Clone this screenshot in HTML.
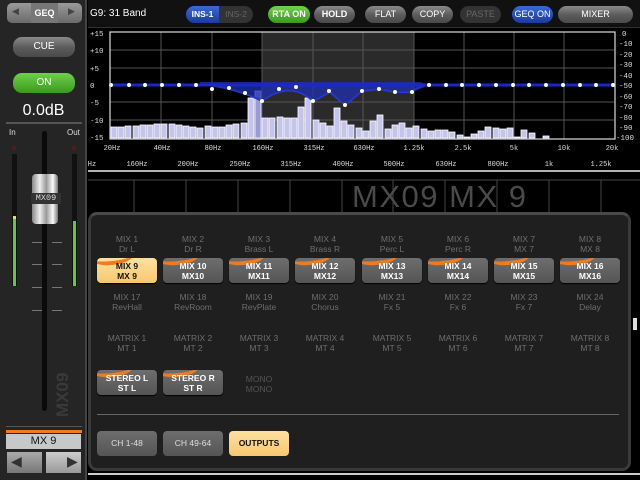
<!DOCTYPE html>
<html><head><meta charset="utf-8"><style>
*{margin:0;padding:0;box-sizing:border-box}
body{width:640px;height:480px;background:#000;position:relative;overflow:hidden;font-family:"Liberation Sans",sans-serif}
.a{position:absolute}
.pill{position:absolute;border-radius:9px;color:#fff;font-size:9px;font-weight:bold;text-align:center;line-height:17px;background:linear-gradient(#8a8a8a,#5a5a5a 55%,#4a4a4a)}
.lbl{position:absolute;width:60px;text-align:center;color:#6e6e6e;font-size:8.5px;line-height:10px}
.btn{position:absolute;width:60px;height:25px;border-radius:4px;background:linear-gradient(#6e6e6e,#555);color:#fff;font-size:8.5px;font-weight:bold;text-align:center;line-height:10px;padding-top:3px;overflow:hidden;box-shadow:0 1px 1px #000}
.btn.o:before{content:"";position:absolute;left:-6px;top:-9px;width:42px;height:12px;border-radius:50%;border-bottom:4px solid #f07a20;transform:rotate(-6deg)}
.btn span{position:relative}
.sel{background:linear-gradient(#fde0a0,#f8c870)!important;color:#111!important}
.bb{position:absolute;top:431px;width:60px;height:25px;border-radius:4px;background:linear-gradient(#6e6e6e,#555);color:#ddd;font-size:8.5px;text-align:center;line-height:25px}
</style></head><body>

<!-- left panel -->
<div class="a" style="left:0;top:0;width:87px;height:480px;background:#252525;border-right:2px solid #444"></div>
<div class="a" style="left:7px;top:3px;width:75px;height:20px;border-radius:5px;background:linear-gradient(#9a9a9a,#6a6a6a)"></div>
<div class="a" style="left:31px;top:3px;width:27px;height:20px;background:#777"></div>
<div class="a" style="left:12px;top:6px;color:#444;font-size:9px">◀</div>
<div class="a" style="left:68px;top:6px;color:#444;font-size:9px">▶</div>
<div class="a" style="left:31px;top:8px;width:27px;text-align:center;color:#fff;font-size:9px;font-weight:bold">GEQ</div>
<div class="pill" style="left:13px;top:37px;width:62px;height:20px;line-height:20px;font-weight:normal;font-size:10px">CUE</div>
<div class="pill" style="left:13px;top:73px;width:62px;height:20px;line-height:20px;font-weight:normal;font-size:10px;background:linear-gradient(#6ed04a,#3a9a1e)">ON</div>
<div class="a" style="left:0;top:102px;width:87px;text-align:center;color:#fff;font-size:16px">0.0dB</div>
<div class="a" style="left:6px;top:122px;width:76px;height:2px;background:#555"></div>
<div class="a" style="left:9px;top:128px;color:#ddd;font-size:8px">In</div>
<div class="a" style="left:67px;top:128px;color:#ddd;font-size:8px">Out</div>
<div class="a" style="left:12px;top:146px;width:4px;height:4px;border-radius:2px;background:#5a1a1a"></div>
<div class="a" style="left:72px;top:146px;width:4px;height:4px;border-radius:2px;background:#5a1a1a"></div>
<div class="a" style="left:12px;top:154px;width:5px;height:132px;background:#111"></div>
<div class="a" style="left:13px;top:217px;width:3px;height:69px;background:#5ccc3a"></div>
<div class="a" style="left:13px;top:216px;width:3px;height:3px;background:#f0e040"></div>
<div class="a" style="left:72px;top:154px;width:5px;height:132px;background:#111"></div>
<div class="a" style="left:73px;top:221px;width:3px;height:65px;background:#5ccc3a"></div>
<div class="a" style="left:42px;top:131px;width:5px;height:280px;border-radius:3px;background:#0a0a0a"></div>
<div class="a" style="left:32px;top:242px;width:10px;height:1px;background:#777;box-shadow:20px 0 #777,0 22px #777,20px 22px #777,0 45px #777,20px 45px #777,0 68px #777,20px 68px #777"></div>
<div class="a" style="left:32px;top:174px;width:26px;height:50px;border-radius:4px;background:linear-gradient(90deg,#888,#eee 30%,#999 55%,#fafafa 80%,#777)"></div>
<div class="a" style="left:31px;top:193px;width:30px;height:11px;background:#333;color:#ddd;font-size:8.5px;text-align:center;line-height:11px;font-family:'Liberation Mono',monospace">MX09</div>
<div class="a" style="transform:rotate(-90deg);color:#3a3a3a;font-size:17px;font-weight:bold;width:60px;transform-origin:0 0;top:417px;left:53px">MX09</div>
<div class="a" style="left:6px;top:426px;width:76px;height:1px;background:#555"></div>
<div class="a" style="left:6px;top:430px;width:76px;height:3px;background:#f07a20"></div>
<div class="a" style="left:6px;top:434px;width:75px;height:15px;background:#c8c8c8;color:#111;font-size:11px;text-align:center;line-height:15px">MX 9</div>
<div class="a" style="left:7px;top:452px;width:35px;height:21px;background:linear-gradient(#aaa,#777)"></div>
<div class="a" style="left:46px;top:452px;width:35px;height:21px;background:linear-gradient(#ccc,#999)"></div>
<div class="a" style="left:11px;top:453px;color:#333;font-size:14px">◀</div>
<div class="a" style="left:67px;top:453px;color:#333;font-size:14px">▶</div>

<!-- top bar -->
<div class="a" style="left:88px;top:0;width:552px;height:28px;background:#111;border-bottom:1px solid #333"></div>
<div class="a" style="left:90px;top:8px;color:#fff;font-size:10px">G9: 31 Band</div>
<div class="a" style="left:186px;top:6px;width:67px;height:17px;border-radius:9px;background:#333;overflow:hidden">
 <div style="position:absolute;left:0;top:0;width:33px;height:17px;background:linear-gradient(#3a6ad8,#1a3aa0);color:#fff;font-size:8.5px;font-weight:bold;line-height:17px;text-align:center">INS-1</div>
 <div style="position:absolute;left:33px;top:0;width:34px;height:17px;color:#666;font-size:8.5px;line-height:17px;text-align:center">INS-2</div></div>
<div class="pill" style="left:268px;top:6px;width:42px;height:17px;background:linear-gradient(#6ed04a,#3a9a1e)">RTA ON</div>
<div class="pill" style="left:314px;top:6px;width:41px;height:17px">HOLD</div>
<div class="pill" style="left:365px;top:6px;width:41px;height:17px;font-weight:normal">FLAT</div>
<div class="pill" style="left:412px;top:6px;width:41px;height:17px;font-weight:normal">COPY</div>
<div class="pill" style="left:460px;top:6px;width:41px;height:17px;background:#333;color:#666;font-weight:normal">PASTE</div>
<div class="pill" style="left:512px;top:6px;width:41px;height:17px;background:linear-gradient(#3a6ad8,#1a3aa0);font-weight:normal">GEQ ON</div>
<div class="pill" style="left:558px;top:6px;width:75px;height:17px;font-weight:normal">MIXER</div>

<!-- graph -->
<svg class="a" style="left:88px;top:28px" width="552" height="190" viewBox="88 28 552 190">
<rect x="262" y="32" width="152" height="107" fill="#2a2a2a"/>
<g stroke="#555" stroke-width="1">
<line x1="110" y1="50" x2="614" y2="50"/><line x1="110" y1="68" x2="614" y2="68"/><line x1="110" y1="85" x2="614" y2="85"/><line x1="110" y1="102" x2="614" y2="102"/><line x1="110" y1="120" x2="614" y2="120"/>
<line x1="161" y1="32" x2="161" y2="139"/><line x1="212" y1="32" x2="212" y2="139"/><line x1="262" y1="32" x2="262" y2="139"/><line x1="313" y1="32" x2="313" y2="139"/><line x1="363" y1="32" x2="363" y2="139"/><line x1="414" y1="32" x2="414" y2="139"/><line x1="464" y1="32" x2="464" y2="139"/><line x1="514" y1="32" x2="514" y2="139"/><line x1="564" y1="32" x2="564" y2="139"/>
</g>
<g fill="#c4c4ee" stroke="#fff" stroke-width="0.8">
<rect x="111" y="127" width="6" height="11"/><rect x="118" y="127" width="6" height="11"/><rect x="125" y="126" width="6" height="12"/><rect x="133" y="126" width="6" height="12"/><rect x="140" y="125" width="6" height="13"/><rect x="147" y="125" width="6" height="13"/><rect x="154" y="124" width="6" height="14"/><rect x="161" y="124" width="6" height="14"/><rect x="169" y="124" width="6" height="14"/><rect x="176" y="125" width="6" height="13"/><rect x="183" y="126" width="6" height="12"/><rect x="190" y="127" width="6" height="11"/><rect x="197" y="128" width="6" height="10"/><rect x="205" y="126" width="6" height="12"/><rect x="212" y="127" width="6" height="11"/><rect x="219" y="127" width="6" height="11"/><rect x="226" y="125" width="6" height="13"/><rect x="233" y="124" width="6" height="14"/><rect x="241" y="123" width="6" height="15"/><rect x="248" y="98" width="6" height="40"/><rect x="255" y="91" width="6" height="47" fill="#9a9ad8"/><rect x="262" y="118" width="6" height="20"/><rect x="269" y="118" width="6" height="20"/><rect x="277" y="117" width="6" height="21"/><rect x="284" y="118" width="6" height="20"/><rect x="291" y="118" width="6" height="20"/><rect x="298" y="107" width="6" height="31"/><rect x="305" y="98" width="6" height="40"/><rect x="313" y="120" width="6" height="18"/><rect x="320" y="123" width="6" height="15"/><rect x="327" y="126" width="6" height="12"/><rect x="334" y="108" width="6" height="30"/><rect x="341" y="121" width="6" height="17"/><rect x="348" y="125" width="6" height="13"/><rect x="356" y="128" width="6" height="10"/><rect x="363" y="131" width="6" height="7"/><rect x="370" y="121" width="6" height="17"/><rect x="377" y="115" width="6" height="23"/><rect x="385" y="129" width="6" height="9"/><rect x="392" y="125" width="6" height="13"/><rect x="399" y="123" width="6" height="15"/><rect x="406" y="128" width="6" height="10"/><rect x="413" y="126" width="6" height="12"/><rect x="421" y="129" width="6" height="9"/><rect x="428" y="131" width="6" height="7"/><rect x="435" y="130" width="6" height="8"/><rect x="442" y="130" width="6" height="8"/><rect x="449" y="132" width="6" height="6"/><rect x="457" y="135" width="6" height="3"/><rect x="464" y="137" width="6" height="1"/><rect x="471" y="134" width="6" height="4"/><rect x="478" y="131" width="6" height="7"/><rect x="485" y="127" width="6" height="11"/><rect x="493" y="128" width="6" height="10"/><rect x="500" y="129" width="6" height="9"/><rect x="507" y="128" width="6" height="10"/><rect x="514" y="137" width="6" height="1"/><rect x="521" y="130" width="6" height="8"/><rect x="529" y="133" width="6" height="5"/><rect x="543" y="136" width="6" height="2"/>
</g>
<path d="M110 85 L210 85 Q240 90 262 101 Q290 80 313 101 L330 92 L345 105 L362 91 L379 89 L395 92 L412 92 Q420 85 430 85 L614 85" fill="none" stroke="#2a3ae0" stroke-width="2"/>
<path d="M200 82 L420 82 L430 85 L412 92 L395 92 L379 89 L362 91 L345 105 L330 92 L313 101 Q290 80 262 101 Q240 90 200 85Z" fill="#2030b0" fill-opacity="0.75"/>
<line x1="110" y1="85" x2="614" y2="85" stroke="#1a28c8" stroke-width="3"/>
<g fill="#fff">
<circle cx="111" cy="85" r="2"/><circle cx="129" cy="85" r="2"/><circle cx="145" cy="85" r="2"/><circle cx="162" cy="85" r="2"/><circle cx="179" cy="85" r="2"/><circle cx="196" cy="85" r="2"/><circle cx="212" cy="89" r="2"/><circle cx="229" cy="88" r="2"/><circle cx="245" cy="93" r="2"/><circle cx="262" cy="101" r="2"/><circle cx="279" cy="89" r="2"/><circle cx="296" cy="87" r="2"/><circle cx="313" cy="101" r="2"/><circle cx="329" cy="91" r="2"/><circle cx="345" cy="105" r="2"/><circle cx="362" cy="91" r="2"/><circle cx="379" cy="89" r="2"/><circle cx="395" cy="92" r="2"/><circle cx="412" cy="92" r="2"/><circle cx="429" cy="85" r="2"/><circle cx="446" cy="85" r="2"/><circle cx="462" cy="85" r="2"/><circle cx="479" cy="85" r="2"/><circle cx="496" cy="85" r="2"/><circle cx="513" cy="85" r="2"/><circle cx="529" cy="85" r="2"/><circle cx="546" cy="85" r="2"/><circle cx="563" cy="85" r="2"/><circle cx="580" cy="85" r="2"/><circle cx="596" cy="85" r="2"/><circle cx="613" cy="85" r="2"/>
</g>
<rect x="110" y="32" width="505" height="107" fill="none" stroke="#ddd" stroke-width="1.2"/>
<g fill="#ddd" font-family="Liberation Mono,monospace" font-size="7.5">
<text x="90" y="36">+15</text><text x="90" y="53">+10</text><text x="90" y="71">+5</text><text x="90" y="88">0</text><text x="90" y="105">-5</text><text x="90" y="123">-10</text><text x="90" y="140">-15</text>
<text x="622" y="36">0</text><text x="619" y="46">-10</text><text x="619" y="57">-20</text><text x="619" y="67">-30</text><text x="619" y="78">-40</text><text x="619" y="88">-50</text><text x="619" y="99">-60</text><text x="619" y="109">-70</text><text x="619" y="120">-80</text><text x="619" y="130">-90</text><text x="616" y="140">-100</text>
</g>
<g fill="#ddd" font-family="Liberation Mono,monospace" font-size="7" text-anchor="middle">
<text x="112" y="150">20Hz</text><text x="162" y="150">40Hz</text><text x="213" y="150">80Hz</text><text x="263" y="150">160Hz</text><text x="314" y="150">315Hz</text><text x="364" y="150">630Hz</text><text x="414" y="150">1.25k</text><text x="463" y="150">2.5k</text><text x="514" y="150">5k</text><text x="564" y="150">10k</text><text x="612" y="150">20k</text>
<text x="92" y="166">Hz</text><text x="137" y="166">160Hz</text><text x="188" y="166">200Hz</text><text x="240" y="166">250Hz</text><text x="291" y="166">315Hz</text><text x="343" y="166">400Hz</text><text x="394" y="166">500Hz</text><text x="446" y="166">630Hz</text><text x="498" y="166">800Hz</text><text x="549" y="166">1k</text><text x="601" y="166">1.25k</text>
</g>
<line x1="88" y1="171" x2="640" y2="171" stroke="#eee" stroke-width="1.5"/>
<line x1="88" y1="180" x2="640" y2="180" stroke="#444"/>
<g stroke="#444"><line x1="134" y1="180" x2="134" y2="218"/><line x1="186" y1="180" x2="186" y2="218"/><line x1="238" y1="180" x2="238" y2="218"/><line x1="290" y1="180" x2="290" y2="218"/><line x1="342" y1="180" x2="342" y2="218"/><line x1="393" y1="180" x2="393" y2="218"/><line x1="445" y1="180" x2="445" y2="218"/><line x1="497" y1="180" x2="497" y2="218"/><line x1="549" y1="180" x2="549" y2="218"/><line x1="601" y1="180" x2="601" y2="218"/></g>
<text x="352" y="207" fill="#4a4a4a" font-size="31" textLength="174" lengthAdjust="spacing" font-family="Liberation Sans,sans-serif">MX09 MX 9</text>
</svg>

<!-- right strip -->
<div class="a" style="left:633px;top:318px;width:4px;height:12px;background:#ddd"></div>
<div class="a" style="left:88px;top:473px;width:552px;height:2px;background:#ccc"></div>

<!-- popup panel -->
<div class="a" style="left:88px;top:212px;width:543px;height:259px;border-radius:9px;background:#1f1f1f;border:3px solid #3a3a3a;border-top-color:#4a4a4a"></div>
<div class="a" style="left:97px;top:414px;width:522px;height:1px;background:#666"></div>

<div class="lbl" style="left:97px;top:234px">MIX 1<br>Dr L</div>
<div class="lbl" style="left:163px;top:234px">MIX 2<br>Dr R</div>
<div class="lbl" style="left:229px;top:234px">MIX 3<br>Brass L</div>
<div class="lbl" style="left:295px;top:234px">MIX 4<br>Brass R</div>
<div class="lbl" style="left:362px;top:234px">MIX 5<br>Perc L</div>
<div class="lbl" style="left:428px;top:234px">MIX 6<br>Perc R</div>
<div class="lbl" style="left:494px;top:234px">MIX 7<br>MX 7</div>
<div class="lbl" style="left:560px;top:234px">MIX 8<br>MX 8</div>

<div class="btn o sel" style="left:97px;top:258px"><span>MIX 9<br>MX 9</span></div>
<div class="btn o" style="left:163px;top:258px"><span>MIX 10<br>MX10</span></div>
<div class="btn o" style="left:229px;top:258px"><span>MIX 11<br>MX11</span></div>
<div class="btn o" style="left:295px;top:258px"><span>MIX 12<br>MX12</span></div>
<div class="btn o" style="left:362px;top:258px"><span>MIX 13<br>MX13</span></div>
<div class="btn o" style="left:428px;top:258px"><span>MIX 14<br>MX14</span></div>
<div class="btn o" style="left:494px;top:258px"><span>MIX 15<br>MX15</span></div>
<div class="btn o" style="left:560px;top:258px"><span>MIX 16<br>MX16</span></div>

<div class="lbl" style="left:97px;top:292px">MIX 17<br>RevHall</div>
<div class="lbl" style="left:163px;top:292px">MIX 18<br>RevRoom</div>
<div class="lbl" style="left:229px;top:292px">MIX 19<br>RevPlate</div>
<div class="lbl" style="left:295px;top:292px">MIX 20<br>Chorus</div>
<div class="lbl" style="left:362px;top:292px">MIX 21<br>Fx 5</div>
<div class="lbl" style="left:428px;top:292px">MIX 22<br>Fx 6</div>
<div class="lbl" style="left:494px;top:292px">MIX 23<br>Fx 7</div>
<div class="lbl" style="left:560px;top:292px">MIX 24<br>Delay</div>

<div class="lbl" style="left:97px;top:333px">MATRIX 1<br>MT 1</div>
<div class="lbl" style="left:163px;top:333px">MATRIX 2<br>MT 2</div>
<div class="lbl" style="left:229px;top:333px">MATRIX 3<br>MT 3</div>
<div class="lbl" style="left:295px;top:333px">MATRIX 4<br>MT 4</div>
<div class="lbl" style="left:362px;top:333px">MATRIX 5<br>MT 5</div>
<div class="lbl" style="left:428px;top:333px">MATRIX 6<br>MT 6</div>
<div class="lbl" style="left:494px;top:333px">MATRIX 7<br>MT 7</div>
<div class="lbl" style="left:560px;top:333px">MATRIX 8<br>MT 8</div>

<div class="btn o" style="left:97px;top:370px"><span>STEREO L<br>ST L</span></div>
<div class="btn o" style="left:163px;top:370px"><span>STEREO R<br>ST R</span></div>
<div class="lbl" style="left:229px;top:374px;color:#555">MONO<br>MONO</div>

<div class="bb" style="left:97px">CH 1-48</div>
<div class="bb" style="left:163px">CH 49-64</div>
<div class="bb sel" style="left:229px;font-weight:bold">OUTPUTS</div>
</body></html>
